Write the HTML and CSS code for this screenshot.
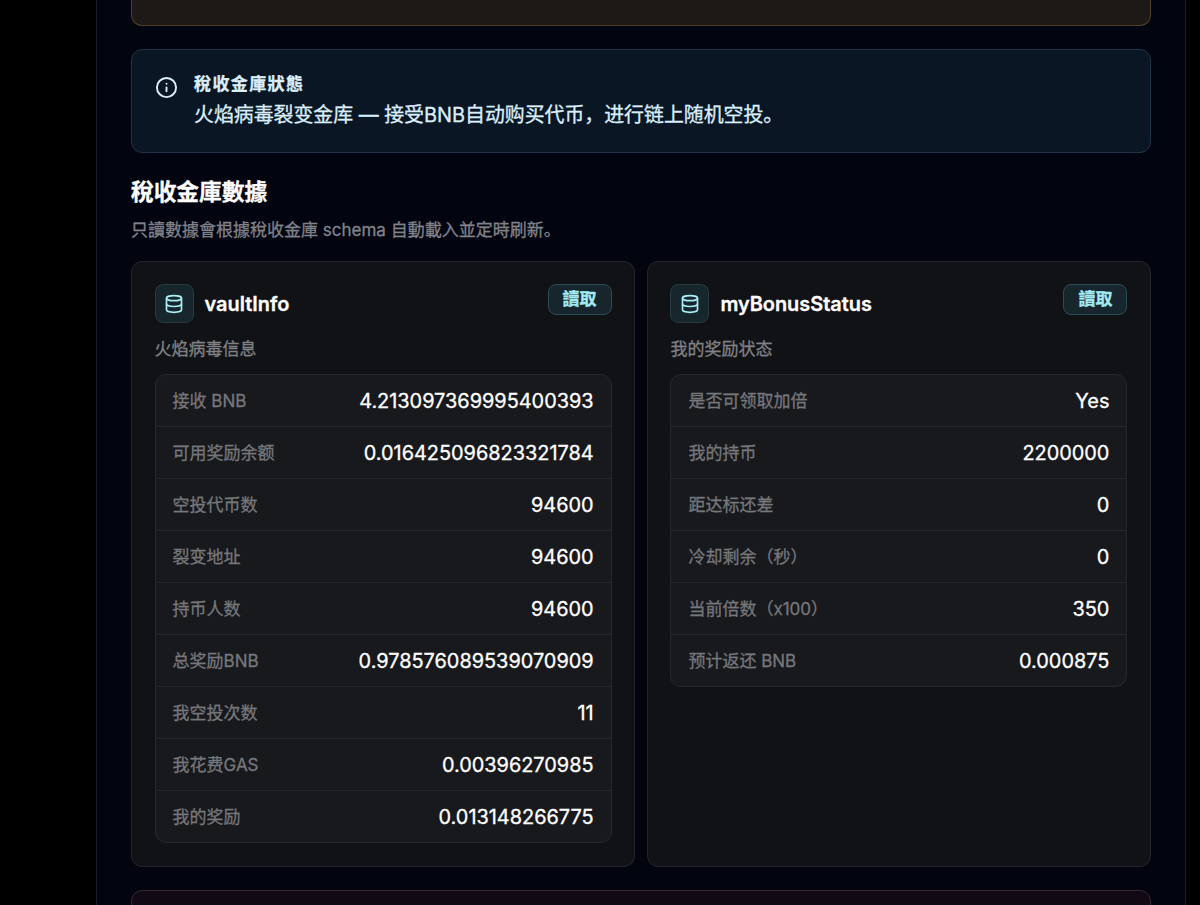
FILE: index.html
```
<!DOCTYPE html>
<html lang="zh-Hant">
<head>
  <meta charset="UTF-8">
  <meta name="viewport" content="width=device-width, initial-scale=1.0">
  <title>稅收金庫</title>
  <link rel="stylesheet" href="styles.css">
</head>
<body>
  <div class="panel">
    <div class="notice notice-warning"></div>

    <div class="notice notice-info">
      <svg class="info-icon" viewBox="0 0 24 24" fill="none" stroke="currentColor" stroke-width="2" stroke-linecap="round" stroke-linejoin="round">
        <circle cx="12" cy="12" r="10"/>
        <path d="M12 16v-4"/>
        <path d="M12 8h.01"/>
      </svg>
      <div>
        <h2 class="notice-title">稅收金庫狀態</h2>
        <p class="notice-text" lang="zh-Hans">火焰病毒裂变金库 — 接受BNB自动购买代币，进行链上随机空投。</p>
      </div>
    </div>

    <h3 class="section-title">稅收金庫數據</h3>
    <p class="section-sub" lang="zh-Hans">只讀數據會根據稅收金庫 schema 自動載入並定時刷新。</p>

    <div class="cards">
      <section class="card">
        <div class="card-head">
          <span class="icon-box">
            <svg viewBox="0 0 24 24" fill="none" stroke="currentColor" stroke-width="2" stroke-linecap="round" stroke-linejoin="round">
              <ellipse cx="12" cy="5" rx="9" ry="3"/>
              <path d="M3 5v14a9 3 0 0 0 18 0V5"/>
              <path d="M3 12a9 3 0 0 0 18 0"/>
            </svg>
          </span>
          <h4>vaultInfo</h4>
          <button type="button" class="read-btn">讀取</button>
        </div>
        <p class="card-desc" lang="zh-Hans">火焰病毒信息</p>
        <dl class="rows" lang="zh-Hans">
          <div class="row"><dt>接收 BNB</dt><dd>4.213097369995400393</dd></div>
          <div class="row"><dt>可用奖励余额</dt><dd>0.016425096823321784</dd></div>
          <div class="row"><dt>空投代币数</dt><dd>94600</dd></div>
          <div class="row"><dt>裂变地址</dt><dd>94600</dd></div>
          <div class="row"><dt>持币人数</dt><dd>94600</dd></div>
          <div class="row"><dt>总奖励BNB</dt><dd>0.978576089539070909</dd></div>
          <div class="row"><dt>我空投次数</dt><dd>11</dd></div>
          <div class="row"><dt>我花费GAS</dt><dd>0.00396270985</dd></div>
          <div class="row"><dt>我的奖励</dt><dd>0.013148266775</dd></div>
        </dl>
      </section>

      <section class="card">
        <div class="card-head">
          <span class="icon-box">
            <svg viewBox="0 0 24 24" fill="none" stroke="currentColor" stroke-width="2" stroke-linecap="round" stroke-linejoin="round">
              <ellipse cx="12" cy="5" rx="9" ry="3"/>
              <path d="M3 5v14a9 3 0 0 0 18 0V5"/>
              <path d="M3 12a9 3 0 0 0 18 0"/>
            </svg>
          </span>
          <h4>myBonusStatus</h4>
          <button type="button" class="read-btn">讀取</button>
        </div>
        <p class="card-desc" lang="zh-Hans">我的奖励状态</p>
        <dl class="rows" lang="zh-Hans">
          <div class="row"><dt>是否可领取加倍</dt><dd>Yes</dd></div>
          <div class="row"><dt>我的持币</dt><dd>2200000</dd></div>
          <div class="row"><dt>距达标还差</dt><dd>0</dd></div>
          <div class="row"><dt>冷却剩余（秒）</dt><dd>0</dd></div>
          <div class="row"><dt>当前倍数（x100）</dt><dd>350</dd></div>
          <div class="row"><dt>预计返还 BNB</dt><dd>0.000875</dd></div>
        </dl>
      </section>
    </div>

    <div class="notice notice-danger"></div>
  </div>
</body>
</html>
```
FILE: styles.css
```
* {
  box-sizing: border-box;
  margin: 0;
  padding: 0;
}
body {
  height: 905px;
  overflow: hidden;
  background: #000;
  color: #fff;
  font-family: Inter, "Noto Sans CJK TC", sans-serif;
  -webkit-text-stroke: 0.3px currentColor;
}
[lang="zh-Hans"] {
  font-family: Inter, "Noto Sans CJK SC", sans-serif;
}
.panel {
  width: 1090px;
  height: 905px;
  margin-left: 96px;
  padding: 0 34px;
  overflow: hidden;
  background: #020410;
  border: solid #1b1d24;
  border-width: 0 1px;
}
.notice {
  border: 1px solid;
  border-radius: 11px;
}
.notice-warning {
  height: 26px;
  border-color: #4d4125;
  border-top: 0;
  border-radius: 0 0 11px 11px;
  background: #1d1916;
}
.notice-info {
  display: flex;
  gap: 16px;
  height: 104px;
  margin-top: 23px;
  padding: 21px 23px;
  border-color: #1f3547;
  background: #0a1623;
  color: #dbeefc;
}
.info-icon {
  width: 23px;
  height: 23px;
  margin-top: 4.5px;
}
.notice-title {
  font-size: 17px;
  line-height: 26px;
  font-weight: 700;
  letter-spacing: 1.4px;
}
.notice-text {
  margin-top: 4px;
  font-size: 19.9px;
  line-height: 28px;
}
.section-title {
  margin-top: 22px;
  font-size: 22.7px;
  line-height: 34px;
  font-weight: 700;
}
.section-sub {
  margin-top: 9px;
  color: #808289;
  font-size: 17px;
  line-height: 24px;
}
.cards {
  display: grid;
  grid-template-columns: 1fr 1fr;
  gap: 11.6px;
  margin-top: 19px;
}
.card {
  height: 606px;
  padding: 22px 22.6px;
  border: 1px solid #26272c;
  border-radius: 11px;
  background: #111216;
}
.card-head {
  display: flex;
  gap: 11px;
  align-items: flex-start;
}
.icon-box {
  display: flex;
  align-items: center;
  justify-content: center;
  width: 39px;
  height: 39px;
  border: 1px solid #263a42;
  border-radius: 8px;
  background: #17252c;
  color: #a9eef6;
}
.icon-box svg {
  width: 20px;
  height: 20px;
}
.card-head h4 {
  flex: 1;
  font-size: 19.9px;
  line-height: 41px;
  font-weight: 600;
}
.read-btn {
  width: 64px;
  height: 31px;
  padding-bottom: 2px;
  border: 1px solid #2c4c55;
  border-radius: 8px;
  background: #17262d;
  color: #a2eaf3;
  font-family: inherit;
  font-size: 17px;
  line-height: 20px;
  font-weight: 700;
}
.card-desc {
  margin-top: 12px;
  color: #808185;
  font-size: 17px;
  line-height: 24px;
}
.rows {
  margin-top: 13px;
  border: 1px solid #26272b;
  border-radius: 11px;
  background: #18191d;
}
.row {
  display: flex;
  align-items: center;
  justify-content: space-between;
  height: 52px;
  padding: 0 17px;
  border-bottom: 1px solid #26272b;
}
.row:last-child {
  height: 51px;
  border-bottom: 0;
}
.row dt {
  padding-bottom: 2px;
  color: #76777b;
  font-size: 17px;
}
.row dd {
  font-size: 19.9px;
}
.notice-danger {
  height: 60px;
  margin-top: 23px;
  border-color: #38282f;
  background: #110914;
}
```
